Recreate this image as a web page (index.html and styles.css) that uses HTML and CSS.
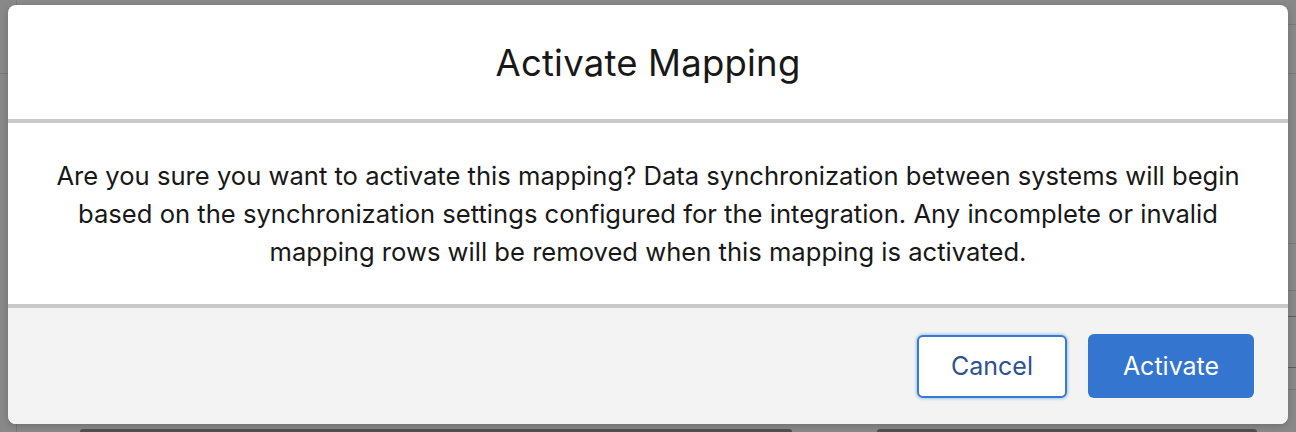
FILE: index.html
```html
<!DOCTYPE html>
<html lang="en">
<head>
    <meta charset="UTF-8">
    <meta name="viewport" content="width=device-width, initial-scale=1.0">
    <title>Activate Mapping</title>
    <link rel="stylesheet" href="styles.css">
</head>
<body>
    <div class="backdrop">
        <span class="rule rule-left-v"></span>
        <span class="rule rule-left-h"></span>
        <span class="rule rule-right rr1"></span>
        <span class="rule rule-right rr2"></span>
        <span class="rule rule-right rr3"></span>
        <span class="rule rule-right rr4"></span>
        <span class="rule rule-right rr5 dark"></span>
        <span class="rule rule-right rr6 dark"></span>
        <span class="rule rule-right rr7"></span>
        <span class="bar bar1"></span>
        <span class="bar bar2"></span>
    </div>

    <section class="modal" role="dialog" aria-labelledby="modal-title">
        <header class="modal-header">
            <h2 id="modal-title">Activate Mapping</h2>
        </header>
        <div class="modal-body">
            <p>Are you sure you want to activate this mapping? Data synchronization between systems will begin based on the synchronization settings configured for the integration. Any incomplete or invalid mapping rows will be removed when this mapping is activated.</p>
        </div>
        <footer class="modal-footer">
            <button class="btn btn-neutral">Cancel</button>
            <button class="btn btn-brand">Activate</button>
        </footer>
    </section>
</body>
</html>
```

FILE: styles.css
```css
* {
    margin: 0;
    padding: 0;
    box-sizing: border-box;
}

body {
    width: 1296px;
    height: 432px;
    overflow: hidden;
    background: #888888;
    font-family: Inter, "Noto Sans", sans-serif;
    padding: 5px 8px 0;
    position: relative;
}

/* page behind the overlay */
.backdrop {
    position: absolute;
    inset: 0;
}

.rule {
    position: absolute;
    background: #777777;
}

.rule-left-v { left: 16px; top: 0; width: 1px; height: 432px; }
.rule-left-h { left: 0; top: 73px; width: 8px; height: 1px; }

.rule-right { right: 0; width: 8px; height: 1px; }
.rr1 { top: 24px; }
.rr2 { top: 73px; }
.rr3 { top: 243px; }
.rr4 { top: 290px; }
.rr5 { top: 316px; }
.rr6 { top: 367px; }
.rr7 { top: 389px; }
.rule.dark { background: #5c5c5c; }

.bar {
    position: absolute;
    bottom: 0;
    height: 3px;
    background: #4f4f4f;
    border-radius: 3px 3px 0 0;
}
.bar1 { left: 80px; width: 712px; }
.bar2 { left: 877px; width: 380px; }

.modal {
    position: relative;
    width: 1280px;
    border-radius: 8px;
    overflow: hidden;
    background: white;
    box-shadow: 0 2px 6px rgba(0, 0, 0, 0.18);
}

.modal-header {
    height: 118px;
    display: flex;
    align-items: center;
    justify-content: center;
    border-bottom: 4px solid #c9c9c9;
    padding-top: 2px;
}

.modal-header h2 {
    font-size: 36.5px;
    font-weight: 400;
    color: #181818;
    letter-spacing: 0.2px;
}

.modal-body {
    height: 185px;
    border-bottom: 4px solid #c9c9c9;
    display: flex;
    align-items: center;
    justify-content: center;
    padding: 0 34px;
}

.modal-body p {
    text-align: center;
    font-size: 25.6px;
    line-height: 38px;
    color: #181818;
}

.modal-footer {
    height: 116px;
    background: #f3f3f3;
    display: flex;
    align-items: center;
    justify-content: flex-end;
    gap: 21px;
    padding: 0 34px;
}

.btn {
    height: 64px;
    border-radius: 6px;
    font-family: inherit;
    font-size: 25px;
    cursor: pointer;
}

.btn-neutral {
    width: 150px;
    height: 63px;
    background: white;
    color: #2d528f;
    border: 2px solid #3a78d2;
    box-shadow: 0 0 3px 1px rgba(1, 118, 211, 0.35);
}

.btn-brand {
    width: 166px;
    background: #3475cf;
    color: white;
    border: none;
}
```
